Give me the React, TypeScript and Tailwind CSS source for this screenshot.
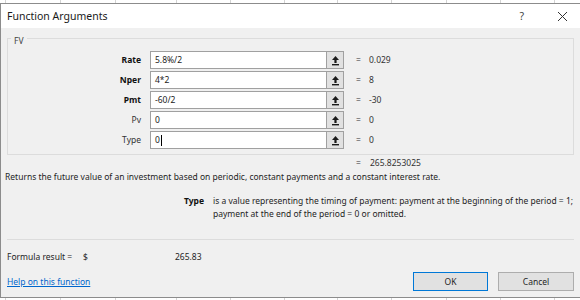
import React from "react";

const cols = [6, 55, 55, 61, 54, 54, 53, 54, 55, 54, 54, 40];

function GridStrip({ h }: { h: string }) {
  return (
    <div className={`flex ${h} bg-white`}>
      {cols.map((w, i) => (
        <div key={i} className="shrink-0 border-r border-[#d4d4d4]" style={{ width: w }} />
      ))}
    </div>
  );
}

function CollapseIcon() {
  return (
    <svg width="9" height="11" viewBox="0 0 9 11">
      <path d="M4.5 1 L8 5 L5.6 5 L5.6 8 L3.4 8 L3.4 5 L1 5 Z" fill="#1a1a1a" />
      <rect x="1" y="9" width="7" height="1.4" fill="#1a1a1a" />
    </svg>
  );
}

const rows = [
  { label: "Rate", bold: true, value: "5.8%/2", result: "0.029" },
  { label: "Nper", bold: true, value: "4*2", result: "8" },
  { label: "Pmt", bold: true, value: "-60/2", result: "-30" },
  { label: "Pv", bold: false, value: "0", result: "0" },
  { label: "Type", bold: false, value: "0", result: "0", cursor: true },
];

export default function App() {
  return (
    <div
      className="w-[580px] h-[300px] overflow-hidden bg-white text-[8.5px] text-[#1e1e1e] leading-[12px]"
      style={{ fontFamily: '"Noto Sans", "Segoe UI", sans-serif' }}
    >
      <GridStrip h="h-[3px]" />
      <div className="h-[295px] border-l border-t border-b border-[#8c8c8c] bg-[#f0f0f0] flex flex-col">
        <div className="h-[24px] bg-white flex items-center pl-[6px] pr-[10px]">
          <span className="text-[10.5px] text-[#1a1a1a] -mt-[1px]">Function Arguments</span>
          <div className="ml-auto flex items-center">
            <span className="text-[10.5px] text-[#444] mr-[33px]">?</span>
            <svg width="11" height="11" viewBox="0 0 11 11" className="mr-[2px]">
              <path d="M1 1 L10 10 M10 1 L1 10" stroke="#333" strokeWidth="1" />
            </svg>
          </div>
        </div>

        <div className="relative mt-[10px] ml-[6px] w-[567px] border border-[#dcdcdc] pt-[12px] pb-[5px]">
          <span className="absolute -top-[4px] left-[3px] px-[3px] bg-[#f0f0f0] text-[#444]">FV</span>
          <div className="flex flex-col gap-[2px]">
            {rows.map((r) => (
              <div key={r.label} className="flex items-center h-[18px]">
                <div
                  className={`w-[133px] text-right ${r.bold ? "font-bold text-[#111]" : "text-[#333]"}`}
                >
                  {r.label}
                </div>
                <div className="ml-[9px] w-[177px] h-[18px] bg-white border border-[#a0a0a0] flex items-center pl-[4px] text-[#222]">
                  {r.value}
                  {r.cursor && <span className="inline-block w-[1px] h-[11px] bg-black ml-[1px]" />}
                </div>
                <div className="w-[18px] h-[18px] -ml-[1px] bg-[#e1e1e1] border border-[#a0a0a0] flex items-center justify-center">
                  <CollapseIcon />
                </div>
                <span className="ml-[12px] w-[13px] text-[#333]">=</span>
                <span className="text-[#333]">{r.result}</span>
              </div>
            ))}
          </div>
        </div>

        <div className="flex mt-[2px]">
          <span className="ml-[355px] w-[14px] text-[#333]">=</span>
          <span className="text-[#333]">265.8253025</span>
        </div>
        <div className="mt-[2px] ml-[4px]">
          Returns the future value of an investment based on periodic, constant payments and a constant interest rate.
        </div>
        <div className="flex mt-[11px] leading-[13px]">
          <div className="w-[203px] text-right font-bold text-[#111]">Type</div>
          <div className="ml-[9px] w-[362px]">
            is a value representing the timing of payment: payment at the beginning of the period = 1;
            <br />
            payment at the end of the period = 0 or omitted.
          </div>
        </div>
        <div className="mt-[19px] ml-[6px] w-[567px] h-[1px] bg-[#dcdcdc]" />
        <div className="flex mt-[11px]">
          <span className="ml-[6px] w-[76px]">Formula result =</span>
          <span className="w-[92px]">$</span>
          <span>265.83</span>
        </div>
        <div className="flex items-center mt-[9px]">
          <span className="ml-[6px] text-[#0066cc] underline">Help on this function</span>
          <div className="ml-auto mr-[6px] flex gap-[10px]">
            <div className="w-[75px] h-[19px] bg-[#e1e1e1] border border-[#0078d7] flex items-center justify-center">
              OK
            </div>
            <div className="w-[76px] h-[19px] bg-[#e1e1e1] border border-[#adadad] flex items-center justify-center">
              Cancel
            </div>
          </div>
        </div>
      </div>
      <GridStrip h="h-[2px]" />
    </div>
  );
}
